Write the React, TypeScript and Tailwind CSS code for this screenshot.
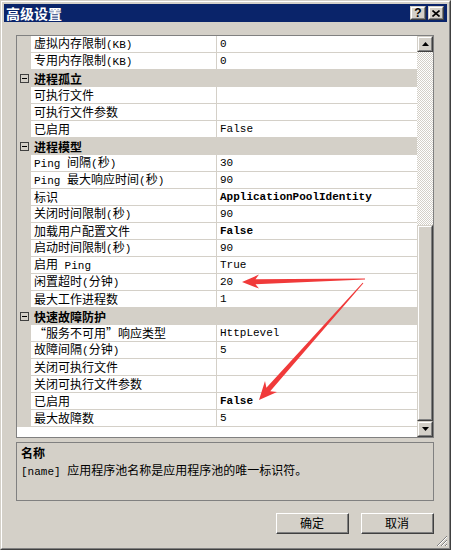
type Row =
  | { kind: 'cat'; label: string }
  | { kind: 'prop'; label: string; value?: string; bold?: boolean };

const rows: Row[] = [
  { kind: 'prop', label: '虚拟内存限制(KB)', value: '0' },
  { kind: 'prop', label: '专用内存限制(KB)', value: '0' },
  { kind: 'cat', label: '进程孤立' },
  { kind: 'prop', label: '可执行文件' },
  { kind: 'prop', label: '可执行文件参数' },
  { kind: 'prop', label: '已启用', value: 'False' },
  { kind: 'cat', label: '进程模型' },
  { kind: 'prop', label: 'Ping 间隔(秒)', value: '30' },
  { kind: 'prop', label: 'Ping 最大响应时间(秒)', value: '90' },
  { kind: 'prop', label: '标识', value: 'ApplicationPoolIdentity', bold: true },
  { kind: 'prop', label: '关闭时间限制(秒)', value: '90' },
  { kind: 'prop', label: '加载用户配置文件', value: 'False', bold: true },
  { kind: 'prop', label: '启动时间限制(秒)', value: '90' },
  { kind: 'prop', label: '启用 Ping', value: 'True' },
  { kind: 'prop', label: '闲置超时(分钟)', value: '20' },
  { kind: 'prop', label: '最大工作进程数', value: '1' },
  { kind: 'cat', label: '快速故障防护' },
  { kind: 'prop', label: '“服务不可用”响应类型', value: 'HttpLevel' },
  { kind: 'prop', label: '故障间隔(分钟)', value: '5' },
  { kind: 'prop', label: '关闭可执行文件' },
  { kind: 'prop', label: '关闭可执行文件参数' },
  { kind: 'prop', label: '已启用', value: 'False', bold: true },
  { kind: 'prop', label: '最大故障数', value: '5' },
];

// Latin runs get the narrow mono face, like the half-width glyphs of the bitmap font
function Txt({ s }: { s: string }) {
  const parts = s.split(/([\x20-\x7e]+)/);
  return (
    <span className="whitespace-pre">
      {parts.map((p, i) =>
        i % 2 ? (
          <span key={i} className="font-['Liberation_Mono',monospace] text-[11px]">
            {p}
          </span>
        ) : (
          p
        ),
      )}
    </span>
  );
}

function Bevel({ className = '', children }: { className?: string; children?: React.ReactNode }) {
  return (
    <div className={`border border-t-[#d4d0c8] border-l-[#d4d0c8] border-r-[#404040] border-b-[#404040] ${className}`}>
      <div className="flex h-full w-full items-center justify-center border border-t-white border-l-white border-r-[#808080] border-b-[#808080] bg-[#d4d0c8]">
        {children}
      </div>
    </div>
  );
}

function Arrow({ up }: { up?: boolean }) {
  return (
    <svg width="7" height="4" viewBox="0 0 7 4">
      <path d={up ? 'M3.5 0L7 4H0Z' : 'M0 0H7L3.5 4Z'} fill="#000" />
    </svg>
  );
}

function PropRow({ row }: { row: Row }) {
  if (row.kind === 'cat') {
    return (
      <div className="flex h-[17px] items-center bg-[#d4d0c8]">
        <div className="flex w-[14px] shrink-0 justify-center">
          <div className="flex h-[9px] w-[9px] items-center justify-center border border-[#404040]">
            <div className="h-px w-[5px] bg-black" />
          </div>
        </div>
        <span className="pl-[3px] font-bold">{row.label}</span>
      </div>
    );
  }
  return (
    <div className="flex h-[17px]">
      <div className="w-[14px] shrink-0 bg-[#d4d0c8]" />
      <div className="flex w-[186px] shrink-0 items-center border-b border-r border-[#d4d0c8] bg-white pl-[3px]">
        <Txt s={row.label} />
      </div>
      <div className="flex flex-1 items-center border-b border-[#d4d0c8] bg-white pl-[3px] whitespace-nowrap">
        {row.value && (
          <span className={`font-['Liberation_Mono',monospace] text-[11px] ${row.bold ? 'font-bold' : ''}`}>{row.value}</span>
        )}
      </div>
    </div>
  );
}

function DlgButton({ label }: { label: string }) {
  return (
    <div className="h-[21px] w-[73px] border border-t-white border-l-white border-r-[#404040] border-b-[#404040]">
      <div className="flex h-full items-center justify-center border-r border-b border-[#808080]">{label}</div>
    </div>
  );
}

export default function App() {
  return (
    <div className="h-[550px] w-[451px] bg-white font-['Noto_Sans_CJK_SC',sans-serif] text-[12px] leading-[16px] text-black">
      <div className="relative h-full w-full border border-t-[#d4d0c8] border-l-[#d4d0c8] border-r-[#404040] border-b-[#404040]">
        <div className="flex h-full flex-col border border-t-white border-l-white border-r-[#808080] border-b-[#808080] bg-[#d4d0c8] p-[2px]">
          {/* title bar */}
          <div className="flex h-[18px] shrink-0 items-center justify-between bg-[#0a246a] pl-[2px] pr-[3px]">
            <span className="text-[14px] font-bold text-white">高级设置</span>
            <div className="flex gap-[2px]">
              <Bevel className="h-[14px] w-[16px]">
                <span className="font-['Liberation_Sans',sans-serif] text-[12px] leading-none font-bold">?</span>
              </Bevel>
              <Bevel className="h-[14px] w-[16px]">
                <svg width="8" height="7" viewBox="0 0 8 7">
                  <path d="M0.5 0.5L7.5 6.5M7.5 0.5L0.5 6.5" stroke="#000" strokeWidth="1.6" />
                </svg>
              </Bevel>
            </div>
          </div>

          {/* property grid */}
          <div className="mt-[13px] ml-[12px] mr-[13px] flex h-[403px] shrink-0 border border-[#808080] bg-white">
            <div className="flex-1">
              {rows.map((r, i) => (
                <PropRow key={i} row={r} />
              ))}
            </div>
            <div className="flex w-[16px] shrink-0 flex-col">
              <Bevel className="h-[16px] w-[16px]">
                <Arrow up />
              </Bevel>
              <div className="h-[173px] bg-[conic-gradient(#d4d0c8_25%,#fff_0_50%,#d4d0c8_0_75%,#fff_0)] bg-[length:2px_2px]" />
              <Bevel className="flex-1" />
              <Bevel className="h-[16px] w-[16px]">
                <Arrow />
              </Bevel>
            </div>
          </div>

          {/* description */}
          <div className="mt-[4px] ml-[12px] mr-[13px] h-[59px] shrink-0 border border-[#808080] px-[4px] pt-[2px]">
            <div className="font-bold">名称</div>
            <div className="mt-[1px]">
              <Txt s="[name] " />
              应用程序池名称是应用程序池的唯一标识符。
            </div>
          </div>

          {/* buttons */}
          <div className="mt-[12px] mr-[13px] flex justify-end gap-[12px]">
            <DlgButton label="确定" />
            <DlgButton label="取消" />
          </div>

          {/* size grip */}
          <svg className="absolute right-[2px] bottom-[2px]" width="12" height="12" viewBox="0 0 12 12">
            <path d="M11 1L1 11M11 5L5 11M11 9L9 11" stroke="#808080" strokeWidth="1" />
            <path d="M11 2L2 11M11 6L6 11M11 10L10 11" stroke="#fff" strokeWidth="1" />
          </svg>
        </div>

        {/* red callout arrows */}
        <svg className="pointer-events-none absolute top-[-1px] left-[-1px]" width="451" height="550" viewBox="0 0 451 550">
          <polygon
            points="242,282 259,274.6 255.5,279.3 365,278.6 365,279.6 255.5,284.3 259,288.6"
            fill="#f03a3a"
          />
          <polygon
            points="259,400 265,381 266.4,387.8 362.6,282.7 363.4,283.3 270.2,391.2 277,392"
            fill="#f03a3a"
          />
        </svg>
      </div>
    </div>
  );
}
